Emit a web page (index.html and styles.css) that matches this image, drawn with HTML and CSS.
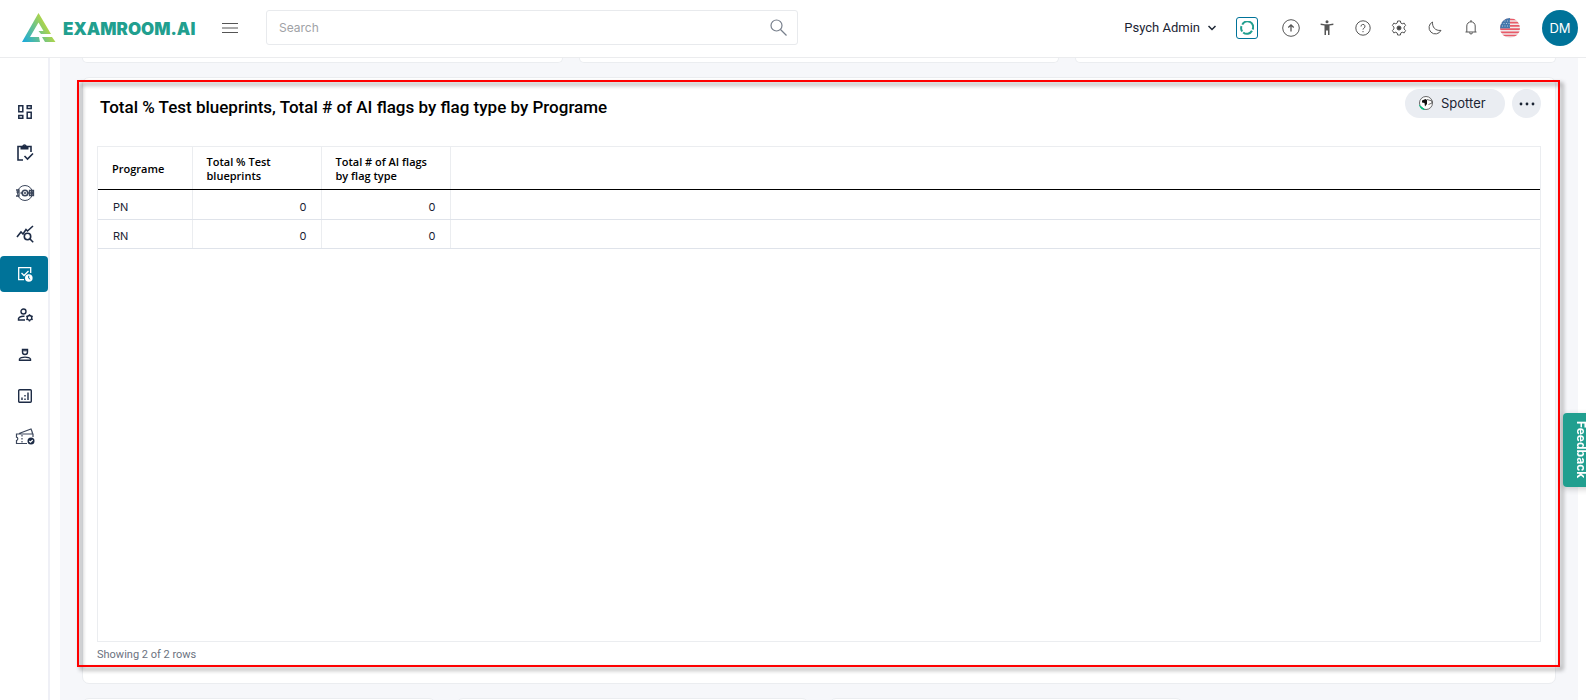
FILE: index.html
```html
<!DOCTYPE html>
<html lang="en">
<head>
  <meta charset="UTF-8">
  <meta name="viewport" content="width=device-width, initial-scale=1.0">
  <title>Examroom.AI</title>
  <link rel="stylesheet" href="styles.css">
</head>
<body>
  <!-- Top bar -->
  <header class="topbar">
    <a class="logo" href="#" aria-label="Examroom.AI">
      <svg width="34" height="30" viewBox="0 0 34 30">
        <defs>
          <linearGradient id="logoFill" x1="0" y1="1" x2="1" y2="0.5">
            <stop offset="0" stop-color="#14a8e0"/>
            <stop offset="0.5" stop-color="#6cc38a"/>
            <stop offset="1" stop-color="#d9e021"/>
          </linearGradient>
        </defs>
        <path fill="url(#logoFill)" d="M16.500 0 29 21H19l-2.500-3h5L16.500 9.500 8 24h9l1 5H0Z M20 24h10l3.500 5H23Z"/>
      </svg>
      <span>EXAMROOM.AI</span>
    </a>
    <button class="icon-btn menu-btn" aria-label="Menu">
      <svg width="16" height="12" viewBox="0 0 16 12" stroke="#555" stroke-width="1"><path d="M0 1.500h16M0 6h16M0 10.500h16"/></svg>
    </button>
    <form class="search">
      <input type="search" placeholder="Search" aria-label="Search">
      <button class="icon-btn" type="button" aria-label="Search">
        <svg width="18" height="18" viewBox="0 0 18 18" fill="none" stroke="#777f8c" stroke-width="1.200"><circle cx="6.500" cy="6.500" r="5.500"/><path d="m10.500 10.500 6 6"/></svg>
      </button>
    </form>
    <div class="tools">
      <button class="role">Psych Admin
        <svg width="8" height="6" viewBox="0 0 8 6" fill="none" stroke="#1b2433" stroke-width="1.500"><path d="m.5 1 3.500 3.500L7.500 1"/></svg>
      </button>
      <button class="refresh" aria-label="Refresh">
        <svg width="14" height="14" viewBox="0 0 14 14" fill="none" stroke="#219f8f" stroke-width="2"><path d="M2.200 10.500A5.700 5.700 0 0 1 1.500 5.200M2.300 3.600a5.700 5.700 0 0 1 10.300 4.900M12 9.800A5.700 5.700 0 0 1 3.200 11.400"/></svg>
      </button>
      <div class="tool-icons">
        <button class="icon-btn" aria-label="Upload">
          <svg width="18" height="18" viewBox="0 0 18 18" fill="none" stroke="#555"><circle cx="9" cy="9" r="8.300"/><path d="M9 12.500V6M6.300 8.500 9 5.800l2.700 2.700" stroke-width="1.300"/></svg>
        </button>
        <button class="icon-btn" aria-label="Accessibility">
          <svg width="14" height="16" viewBox="0 0 14 16" fill="#555"><circle cx="7" cy="1.700" r="1.500"/><path d="M.7 3.600 5 4.300h4l4.300-.7.1 1.300L9.500 5.600V15H8v-4.500H6V15H4.500V5.600L.6 4.900Z"/></svg>
        </button>
        <button class="icon-btn" aria-label="Help">
          <svg width="16" height="16" viewBox="0 0 16 16" fill="none" stroke="#555"><circle cx="8" cy="8" r="7.200"/><path d="M6 6.500a2 2 0 1 1 2.900 1.700C8.200 8.600 8 8.900 8 9.600"/><path d="M8 11v1.200"/></svg>
        </button>
        <button class="icon-btn" aria-label="Settings">
          <svg width="16" height="16" viewBox="0 0 16 16" fill="none" stroke="#555"><path d="M6.600 1h2.800l.4 2 1.400.8 2-.7 1.400 2.400L13.100 7v2l1.500 1.500-1.400 2.400-2-.7-1.400.8-.4 2H6.600l-.4-2-1.400-.8-2 .7-1.400-2.400L2.900 9V7L1.400 5.500l1.400-2.400 2 .7L6.200 3Z" stroke-linejoin="round"/><circle cx="8" cy="8" r="2" fill="#444"/></svg>
        </button>
        <button class="icon-btn" aria-label="Dark mode">
          <svg width="14" height="14" viewBox="0 0 14 14" fill="none" stroke="#555" stroke-linejoin="round"><path d="M4.500 1C4.200 6 7 10 13 9.400A6.300 6.300 0 1 1 4.500 1Z"/></svg>
        </button>
        <button class="icon-btn" aria-label="Notifications">
          <svg width="12" height="15" viewBox="0 0 12 15" fill="none" stroke="#555"><path d="M.5 12h11M1.800 12V6a4.200 4.200 0 0 1 8.400 0v6M6 0v2M4.500 12.500a1.500 1.500 0 0 0 3 0"/></svg>
        </button>
      </div>
      <button class="icon-btn flag-btn" aria-label="Language">
        <svg width="20" height="20" viewBox="0 0 20 20">
          <clipPath id="flagClip"><circle cx="10" cy="10" r="10"/></clipPath>
          <g clip-path="url(#flagClip)">
            <rect width="20" height="20" fill="#f1e8ea"/>
            <path d="M0 1.500h20M0 4.700h20M0 7.900h20M0 11.100h20M0 14.300h20M0 17.500h20" stroke="#e85a68" stroke-width="1.700"/>
            <rect width="10" height="10.300" fill="#4577ab"/>
            <path d="M2 3h8M1 5.500h9M2 8h8" stroke="#b7c9df" stroke-dasharray="1 1.500"/>
          </g>
        </svg>
      </button>
      <button class="avatar">DM</button>
    </div>
  </header>

  <div class="layout">
    <!-- Side navigation -->
    <nav class="sidebar">
      <a href="#" aria-label="Dashboard">
        <svg width="16" height="16" viewBox="0 0 16 16" fill="none" stroke="#1d2b45" stroke-width="1.500"><path d="M1.800 1.800h4v6h-4zM10.200 1.800h4v2.700h-4zM1.800 11.500h4v2.700h-4zM10.200 8.200h4v6h-4z"/></svg>
      </a>
      <a href="#" aria-label="Assessments">
        <svg width="18" height="18" viewBox="0 0 18 18" fill="none" stroke="#1d2b45" stroke-width="1.600"><path d="M7 16H2V2.500h13V8M8.500 12l3 3L17 9.500"/><path d="M4.500 2h8v3.500h-8z" fill="#1d2b45" stroke="none"/><path d="M7 2a1.600 1.600 0 0 1 3 0"/></svg>
      </a>
      <a href="#" aria-label="Jobs">
        <svg width="20" height="18" viewBox="0 0 20 18" fill="none" stroke="#3c475c"><circle cx="10" cy="9" r="7.500"/><circle cx="10" cy="9" r="2.800" stroke-width="1.600"/><circle cx="10" cy="9" r=".8"/><path d="M1 6h3v6H1M4 8H1.500M14.500 6.500h4v5h-4zM14.500 9h4.500M16.500 5.500v6.500M5.500 9H7M13 9h1.500" stroke-width="1.300"/></svg>
      </a>
      <a href="#" aria-label="Analysis">
        <svg width="18" height="18" viewBox="0 0 18 18" fill="none" stroke="#1d2b45" stroke-width="1.600"><path d="m1 12 4-5L7 9l3-4.500 1.500 1.500L17 1"/><circle cx="11.500" cy="11.500" r="3.200"/><path d="m14 14 3.200 3.200"/></svg>
      </a>
      <a href="#" class="active" aria-label="Exam schedule">
        <svg width="16" height="16" viewBox="0 0 16 16" fill="none" stroke="#fff" stroke-width="1.300"><path d="M7 13.700H1.700V1.700h12V7M4.500 7l2.500 2.500L11.500 5"/><circle cx="11.800" cy="12" r="3.800" fill="#fff" stroke="none"/><path d="M11.700 9.800v2.400l1.500 1" stroke="#007399" stroke-width="1"/></svg>
      </a>
      <a href="#" aria-label="User settings">
        <svg width="17" height="14" viewBox="0 0 17 14" fill="none" stroke="#1d2b45" stroke-width="1.400"><circle cx="6.500" cy="3.500" r="2.500"/><path d="M8 12H1.500v-1.500C2.500 8.500 5 8 7.500 8.300"/><circle cx="12.500" cy="9.800" r="2.300"/><path d="M12.500 6.200v1.300M12.500 12v1.400M9.300 8l1.200.7M14.500 11l1.200.7M9.300 11.700l1.200-.7M14.500 8.700l1.200-.7"/></svg>
      </a>
      <a href="#" aria-label="Proctors">
        <svg width="14" height="14" viewBox="0 0 14 14" fill="none" stroke="#1d2b45" stroke-width="1.400"><path d="M4.500 1.500h5V4a2.500 2.500 0 0 1-5 0ZM1.500 12.300V11C3 8.500 11 8.500 12.500 11v1.300Z"/><path d="M4.500 2.800h5" stroke-width="1"/></svg>
      </a>
      <a href="#" aria-label="Reports">
        <svg width="16" height="16" viewBox="0 0 16 16" fill="none" stroke="#1d2b45" stroke-width="1.400"><rect x="1.700" y="1.700" width="12.600" height="12.600" rx="1"/><path d="M5 9.500V12M8 10.500V12M11 4.500V12M8 7v1.500"/></svg>
      </a>
      <a href="#" aria-label="Vouchers">
        <svg width="20" height="17" viewBox="0 0 20 17" fill="none" stroke="#3c475c" stroke-width="1.200"><path d="M12 15.500H1.500v-3a1.700 1.700 0 0 0 0-3.300V6h16.500v3M4 5.500l12-4.500 1 2.500.5 2M7 7v1.500M7 10v1.500M7 13v1.500"/><circle cx="16" cy="13" r="3.500" fill="#1d2b45" stroke="none"/><path d="m14.300 13 1.200 1.200 2.200-2.200" stroke="#fff"/></svg>
      </a>
    </nav>

    <main class="content">
      <div class="card-row above">
        <div class="card"></div>
        <div class="card"></div>
        <div class="card"></div>
      </div>

      <!-- Blueprint / flags report -->
      <section class="card report">
        <div class="report-head">
          <h2>Total % Test blueprints, Total # of AI flags by flag type by Programe</h2>
          <div class="report-actions">
            <button class="spotter">
              <svg width="14" height="14" viewBox="0 0 14 14"><circle cx="7" cy="7" r="6.500" fill="#fff" stroke="#444" stroke-width=".8"/><path d="M3 4.500 6.500 3l1.500 1v4L6 10.500 5.500 7 3 6.500Z" fill="#111"/><path d="M8 3.500 13 5v2L9.500 8.500" fill="none" stroke="#444" stroke-width=".8"/><path d="m.5 9.500 5 4-3-.8Z" fill="#06bf7f" stroke="#06bf7f"/></svg>
              Spotter
            </button>
            <button class="more" aria-label="More">
              <svg width="16" height="4" viewBox="0 0 16 4" fill="#1b2433"><circle cx="2" cy="2" r="1.400"/><circle cx="8" cy="2" r="1.400"/><circle cx="14" cy="2" r="1.400"/></svg>
            </button>
          </div>
        </div>
        <div class="table-box">
          <table>
            <thead>
              <tr>
                <th class="col-program">Programe</th>
                <th class="col-value">Total % Test blueprints</th>
                <th class="col-value">Total # of AI flags by flag type</th>
                <th></th>
              </tr>
            </thead>
            <tbody>
              <tr><td>PN</td><td class="num">0</td><td class="num">0</td><td></td></tr>
              <tr><td>RN</td><td class="num">0</td><td class="num">0</td><td></td></tr>
            </tbody>
          </table>
        </div>
        <p class="row-count">Showing 2 of 2 rows</p>
        <div class="highlight"></div>
      </section>

      <div class="card-row below">
        <div class="card"></div>
        <div class="card"></div>
        <div class="card"></div>
      </div>
    </main>
  </div>

  <button class="feedback">Feedback</button>
</body>
</html>
```
FILE: styles.css
```css
* {
  box-sizing: border-box;
}

body {
  margin: 0;
  height: 100vh;
  display: flex;
  flex-direction: column;
  overflow: hidden;
  font-family: Inter, "Liberation Sans", sans-serif;
  font-size: 13px;
  color: #1b2433;
  background: #fff;
}

button {
  font: inherit;
  color: inherit;
  border: 0;
  padding: 0;
  background: none;
  cursor: pointer;
}

svg {
  display: block;
}

/* Top bar */
.topbar {
  display: flex;
  align-items: center;
  height: 58px;
  flex: none;
  padding: 0 8px 2px 22px;
  border-bottom: 1px solid #ebecee;
}

.logo {
  display: flex;
  align-items: center;
  gap: 7px;
  width: 200px;
  color: #219f8f;
  font-size: 17px;
  font-weight: 900;
  text-decoration: none;
}

.logo span {
  padding-top: 2px;
}

.icon-btn {
  display: flex;
  align-items: center;
  justify-content: center;
  width: 20px;
  height: 20px;
}

.menu-btn {
  width: 16px;
  margin-right: 28px;
}

.search {
  display: flex;
  align-items: center;
  flex: 0 1 532px;
  height: 35px;
  padding: 0 8px 0 12px;
  border: 1px solid #e8eaed;
  border-radius: 3px;
}

.search input {
  flex: 1;
  border: 0;
  padding: 0;
  outline: none;
  font: inherit;
  font-size: 12px;
  background: none;
}

.search input::placeholder {
  color: #a0a2a6;
}

.tools {
  display: flex;
  align-items: center;
  margin-left: auto;
}

.role {
  display: flex;
  align-items: center;
  gap: 8px;
  margin-right: 20px;
  font-family: Roboto, sans-serif;
}

.refresh {
  display: flex;
  align-items: center;
  justify-content: center;
  width: 22px;
  height: 22px;
  margin-right: 23px;
  border: 1px solid #007399;
  border-radius: 3px;
}

.tool-icons {
  display: flex;
  gap: 16px;
}

.flag-btn {
  margin: 0 22px 0 19px;
}

.avatar {
  width: 36px;
  height: 36px;
  border-radius: 50%;
  background: #007399;
  color: #fff;
}

/* Side navigation */
.layout {
  display: flex;
  flex: 1;
  min-height: 0;
}

.sidebar {
  display: flex;
  flex-direction: column;
  flex: none;
  width: 50px;
  padding-top: 36px;
  border-right: 2px solid #eff0f6;
}

.sidebar a {
  display: flex;
  align-items: center;
  justify-content: center;
  height: 36px;
  margin-bottom: 4px;
  padding-left: 2px;
  border-radius: 4px;
}

.sidebar a:nth-child(odd) {
  margin-bottom: 5px;
}

.sidebar .active {
  background: #007399;
}

/* Content */
.content {
  flex: 1;
  min-width: 0;
  margin: 0 8px 0 10px;
  padding: 0 22px;
  overflow: hidden;
  background: #f6f7fa;
}

.card {
  background: #fff;
  border: 1px solid #ebedf0;
  border-radius: 7px;
}

.card-row {
  display: grid;
  grid-template-columns: repeat(3, 1fr);
  gap: 16px;
}

.above .card {
  height: 5px;
  border-top: 0;
  border-radius: 0 0 7px 7px;
}

.below {
  grid-template-columns: repeat(4, 1fr);
  gap: 20px;
}

.below .card {
  height: 120px;
}

.report {
  position: relative;
  margin: 14px 0;
  padding: 11px 14px 21px;
}

.report-head {
  display: flex;
  justify-content: space-between;
  height: 57px;
}

.report-head h2 {
  margin: 8px 0 0 3px;
  font-family: Roboto, sans-serif;
  font-size: 17px;
  line-height: 20px;
  font-weight: 500;
  color: #000;
}

.report-actions {
  display: flex;
  gap: 7px;
}

.spotter,
.more {
  display: flex;
  align-items: center;
  gap: 8px;
  height: 29px;
  border-radius: 15px;
  background: #eaedf2;
}

.spotter {
  width: 100px;
  padding: 0 0 1px 14px;
}

.more {
  width: 29px;
  justify-content: center;
}

.table-box {
  height: 496px;
  border: 1px solid #ebedf0;
}

table {
  width: 100%;
  border-collapse: collapse;
  table-layout: fixed;
  font-size: 11px;
}

th,
td {
  border-right: 1px solid #ebedf0;
}

th:last-child,
td:last-child {
  border-right: 0;
}

th {
  height: 42px;
  padding: 2px 14px 0;
  border-bottom: 1px solid #000;
  font-family: "Open Sans", sans-serif;
  line-height: 14px;
  font-weight: 600;
  text-align: left;
  color: #000;
}

td {
  height: 29px;
  padding: 4px 14px 0 15px;
  border-bottom: 1px solid #dfe3ea;
}

tbody tr:first-child td {
  height: 30px;
  padding-top: 5px;
}

.col-program {
  width: 94px;
}

.col-value {
  width: 129px;
}

.num {
  text-align: right;
}

.row-count {
  margin: 5px 0 0;
  font-family: Roboto, sans-serif;
  font-size: 11px;
  line-height: 15px;
  color: #6b7280;
}

/* Red frame drawn over the report */
.highlight {
  position: absolute;
  inset: 2px -5px 16px -6px;
  border: 2px solid #f00;
  filter: drop-shadow(3px 3px 2px rgba(0, 0, 0, 0.45));
  pointer-events: none;
}

/* Feedback tab on the right edge */
.feedback {
  position: fixed;
  top: 413px;
  right: -19px;
  width: 42px;
  height: 74px;
  padding-right: 6px;
  border-radius: 4px;
  background: #219f8f;
  box-shadow: 0 2px 6px rgba(0, 0, 0, 0.2);
  color: #fff;
  font-size: 12px;
  font-weight: 700;
  writing-mode: vertical-rl;
}
```
